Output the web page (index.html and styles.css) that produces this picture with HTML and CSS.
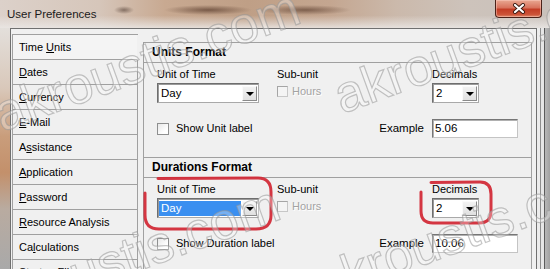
FILE: index.html
```html
<!DOCTYPE html>
<html>
<head>
<meta charset="utf-8">
<link rel="stylesheet" href="styles.css">
</head>
<body>
<div class="window">
  <div class="titlebar">
    <span class="title">User Preferences</span>
    <div class="close">
      <svg width="14" height="11" viewBox="0 0 14 11">
        <path d="M3 2 L11 9 M11 2 L3 9" stroke="#3a1a12" stroke-width="4" stroke-linecap="round"/>
        <path d="M3 2 L11 9 M11 2 L3 9" stroke="#fff" stroke-width="2.2" stroke-linecap="round"/>
      </svg>
    </div>
  </div>
  <div class="frame">
    <div class="frame-left"></div>
    <div class="client">
      <ul class="nav">
        <li class="nav-item is-active">Time <u>U</u>nits</li>
        <li class="nav-item"><u>D</u>ates</li>
        <li class="nav-item"><u>C</u>urrency</li>
        <li class="nav-item"><u>E</u>-Mail</li>
        <li class="nav-item">A<u>s</u>sistance</li>
        <li class="nav-item"><u>A</u>pplication</li>
        <li class="nav-item"><u>P</u>assword</li>
        <li class="nav-item"><u>R</u>esource Analysis</li>
        <li class="nav-item">Ca<u>l</u>culations</li>
        <li class="nav-item">Startup Files</li>
      </ul>
      <div class="panel">
        <section class="section">
          <div class="section-header">Units Format</div>
          <div class="fields">
            <div class="field">
              <span class="label">Unit of Time</span>
              <div class="select select-wide">
                <span class="value">Day</span>
                <span class="btn"><span class="arrow"></span></span>
              </div>
            </div>
            <div class="field">
              <span class="label">Sub-unit</span>
              <div class="check check-disabled"><span class="box"></span><span>Hours</span></div>
            </div>
            <div class="field">
              <span class="label">Decimals</span>
              <div class="select select-narrow">
                <span class="value">2</span>
                <span class="btn"><span class="arrow"></span></span>
              </div>
            </div>
            <div class="check check-row"><span class="box"></span><span>Show Unit label</span></div>
            <span class="example-label">Example</span>
            <div class="input">5.06</div>
          </div>
        </section>
        <section class="section">
          <div class="section-header">Durations Format</div>
          <div class="fields">
            <div class="field">
              <span class="label">Unit of Time</span>
              <div class="select select-wide">
                <span class="value"><span class="highlight">Day</span></span>
                <span class="btn"><span class="arrow"></span></span>
              </div>
            </div>
            <div class="field">
              <span class="label">Sub-unit</span>
              <div class="check check-disabled"><span class="box"></span><span>Hours</span></div>
            </div>
            <div class="field">
              <span class="label">Decimals</span>
              <div class="select select-narrow">
                <span class="value">2</span>
                <span class="btn"><span class="arrow"></span></span>
              </div>
            </div>
            <div class="check check-row"><span class="box"></span><span>Show Duration label</span></div>
            <span class="example-label">Example</span>
            <div class="input">10.06</div>
          </div>
        </section>
      </div>
    </div>
    <div class="frame-right"></div>
  </div>

  <svg class="marks" width="550" height="269" viewBox="0 0 550 269">
    <path d="M158 178.5 L258 178 Q271 178 271 192 L271 215 Q271 229 256 229 L159 229 Q145 229 145 215 L145 193" />
    <path d="M431 182.5 L480 182 Q491 182 491 194 L491 211 Q491 223 479 223 L433 223 Q421 223 421 211 L421 192" />
  </svg>

  <div class="watermark">
    <span class="wm wm-1">akroustis.com</span>
    <span class="wm wm-2">akroustis.com</span>
    <span class="wm wm-3">akroustis.com</span>
    <span class="wm wm-4">akroustis.com</span>
  </div>
</div>
</body>
</html>
```

FILE: styles.css
```css
html, body {
  margin: 0;
  padding: 0;
}
body {
  width: 550px;
  height: 269px;
  overflow: hidden;
  font-family: "Liberation Sans", Arial, sans-serif;
  font-size: 11px;
  color: #000;
}
.window {
  position: relative;
  width: 550px;
  height: 269px;
  overflow: hidden;
  display: flex;
  flex-direction: column;
  background: #f0f0f0;
}

/* ---------- title bar ---------- */
.titlebar {
  flex: none;
  height: 28px;
  display: flex;
  justify-content: space-between;
  align-items: flex-start;
  background:
    radial-gradient(ellipse 10px 4px at 124px 10px, rgba(70,50,40,.55), rgba(70,50,40,0)),
    radial-gradient(ellipse 44px 5px at 208px 10px, rgba(80,50,35,.65), rgba(80,50,35,0)),
    radial-gradient(ellipse 46px 5px at 305px 10px, rgba(80,50,35,.6), rgba(80,50,35,0)),
    linear-gradient(to bottom, rgba(255,255,255,0) 55%, rgba(235,232,230,.85) 100%),
    linear-gradient(to right, #dcd1ca 0%, #d6c6ba 18%, #c8a991 30%, #bf9f86 45%, #c4a690 60%, #cbb9ab 72%, #cdc3bb 85%, #c9c1bb 100%);
}
.title {
  margin: 7px 0 0 7px;
  font-size: 11.5px;
  line-height: 14px;
  color: #1b1b1b;
}
.close {
  width: 47px;
  height: 18px;
  margin-right: 8px;
  box-sizing: border-box;
  border: 1px solid #4b2219;
  border-top: none;
  border-radius: 0 0 4px 4px;
  background: linear-gradient(#e9a892 0%, #d8735d 45%, #c33d25 55%, #cc5338 85%, #dd8a6c 100%);
  box-shadow: inset 0 0 0 1px rgba(255,210,200,.45);
  display: flex;
  align-items: center;
  justify-content: center;
}

/* ---------- frame ---------- */
.frame {
  flex: 1;
  display: flex;
  min-height: 0;
}
.frame-left {
  width: 10px;
  flex: none;
  background: linear-gradient(#e3dfdb 0%, #d9c8ba 25%, #c99d7b 45%, #c3906b 60%, #b9aba0 75%, #a9a9a9 100%);
}
.frame-right {
  width: 14px;
  flex: none;
  box-sizing: border-box;
  background: linear-gradient(to right, #ececec 0, #ececec 3px, #8d8d8d 3px, #8d8d8d 4px, #e6e6e6 4px, #e6e6e6 7px, #5b5b5b 7px, #5b5b5b 8px, #b7b7b7 8px, #9d9d9d 14px);
}
.client {
  width: 524px;
  flex: none;
  border: 1px solid #707070;
  border-bottom: none;
  background: #f0f0f0;
  display: flex;
  align-items: flex-start;
  padding: 5px 0 0 1px;
  box-sizing: content-box;
}

/* ---------- nav ---------- */
.nav {
  list-style: none;
  margin: 0;
  padding: 0;
  width: 126px;
  flex: none;
  box-sizing: border-box;
  border-left: 1px solid #a0a0a0;
  border-top: 1px solid #a0a0a0;
}
.nav-item {
  height: 25px;
  box-sizing: border-box;
  padding-left: 6px;
  line-height: 24px;
  border-bottom: 1px solid #a0a0a0;
  border-right: 1px solid #a0a0a0;
  white-space: nowrap;
}
.nav-item.is-active {
  border-right-color: #f0f0f0;
  background: #f4f4f4;
}

/* ---------- panel ---------- */
.panel {
  margin: 8px 0 0 5px;
  width: 389px;
  flex: none;
  box-sizing: border-box;
  height: 300px;
  border-left: 1px solid #a0a0a0;
  border-right: 1px solid #a0a0a0;
}
.section {
  height: 115px;
}
.section-header {
  height: 21px;
  box-sizing: border-box;
  border-top: 1px solid #a0a0a0;
  border-bottom: 1px solid #a0a0a0;
  padding-left: 8px;
  font-weight: bold;
  font-size: 12px;
  line-height: 19px;
}
.fields {
  display: grid;
  grid-template-columns: 120px 155px 90px;
  padding: 5px 0 0 13px;
  align-items: start;
}
.field {
  display: flex;
  flex-direction: column;
  align-items: flex-start;
}
.label {
  line-height: 13px;
  height: 13px;
}

/* select */
.select {
  margin-top: 2px;
  height: 20px;
  box-sizing: border-box;
  border: 1px solid #6e6e6e;
  border-right-color: #a9a9a9;
  border-bottom-color: #a9a9a9;
  box-shadow: inset 1px 1px 0 #9a9a9a;
  background: #fff;
  display: flex;
  align-items: stretch;
}
.select-wide { width: 102px; }
.select-narrow { width: 47px; }
.value {
  flex: 1;
  display: flex;
  padding: 2px 1px 1px 3px;
  line-height: 15px;
  font-size: 11.5px;
}
.highlight {
  flex: 1;
  background: #3a8ff0;
  color: #fff;
  margin-left: -2px;
  padding-left: 2px;
}
.btn {
  width: 15px;
  margin: 2px 1px 1px 0;
  box-sizing: border-box;
  background: linear-gradient(#f2f2f2, #e0e0e0);
  border: 1px solid #fafafa;
  border-right-color: #8a8a8a;
  border-bottom-color: #8a8a8a;
  display: flex;
  align-items: center;
  justify-content: center;
}
.arrow {
  width: 0;
  height: 0;
  border-left: 4px solid transparent;
  border-right: 4px solid transparent;
  border-top: 4px solid #000;
}

/* checkbox */
.check {
  display: flex;
  align-items: center;
  gap: 7px;
  line-height: 13px;
  white-space: nowrap;
}
.box {
  width: 12px;
  height: 12px;
  box-sizing: border-box;
  border: 1px solid #8e8f8f;
  background: linear-gradient(135deg, #e8e8e8, #ffffff 70%);
  flex: none;
}
.check-disabled {
  margin-top: 4px;
  gap: 4px;
  color: #a3a3a3;
  text-shadow: 1px 1px 0 #ffffff;
}
.check-disabled .box {
  width: 11px;
  height: 11px;
  border-color: #c7c7c7;
  border-left-color: #a5a5a5;
  border-top-color: #a5a5a5;
  background: #f4f4f4;
}
.check-row {
  grid-column: 1;
  grid-row: 2;
  margin-top: 16px;
  height: 19px;
}
.example-label {
  grid-column: 2;
  grid-row: 2;
  justify-self: end;
  margin: 16px 8px 0 0;
  line-height: 19px;
  font-size: 11.5px;
}
.input {
  grid-column: 3;
  grid-row: 2;
  margin-top: 16px;
  width: 86px;
  height: 19px;
  box-sizing: border-box;
  border: 1px solid #767676;
  border-right-color: #c4c4c4;
  border-bottom-color: #c4c4c4;
  box-shadow: inset 1px 1px 0 #b0b0b0;
  background: #fff;
  padding-left: 2px;
  line-height: 17px;
  font-size: 11.5px;
}

/* ---------- annotation loops ---------- */
.marks {
  position: absolute;
  left: 0;
  top: 0;
  pointer-events: none;
}
.marks path {
  fill: none;
  stroke: #d12633;
  stroke-width: 3;
  stroke-linecap: round;
  stroke-linejoin: round;
  opacity: .92;
}

/* ---------- watermark ---------- */
.watermark {
  position: absolute;
  inset: 0;
  pointer-events: none;
}
.wm {
  position: absolute;
  font-family: "Liberation Sans", Arial, sans-serif;
  font-size: 52px;
  line-height: 52px;
  white-space: nowrap;
  color: rgba(255,255,255,.30);
  -webkit-text-stroke: 1.2px rgba(150,150,150,.55);
  transform-origin: 0 44px;
  transform: rotate(-20deg);
}
.wm-1 { left: 2px; top: 88px; }
.wm-2 { left: 342px; top: 70px; }
.wm-3 { left: -18px; top: 284px; }
.wm-4 { left: 322px; top: 258px; }
```
